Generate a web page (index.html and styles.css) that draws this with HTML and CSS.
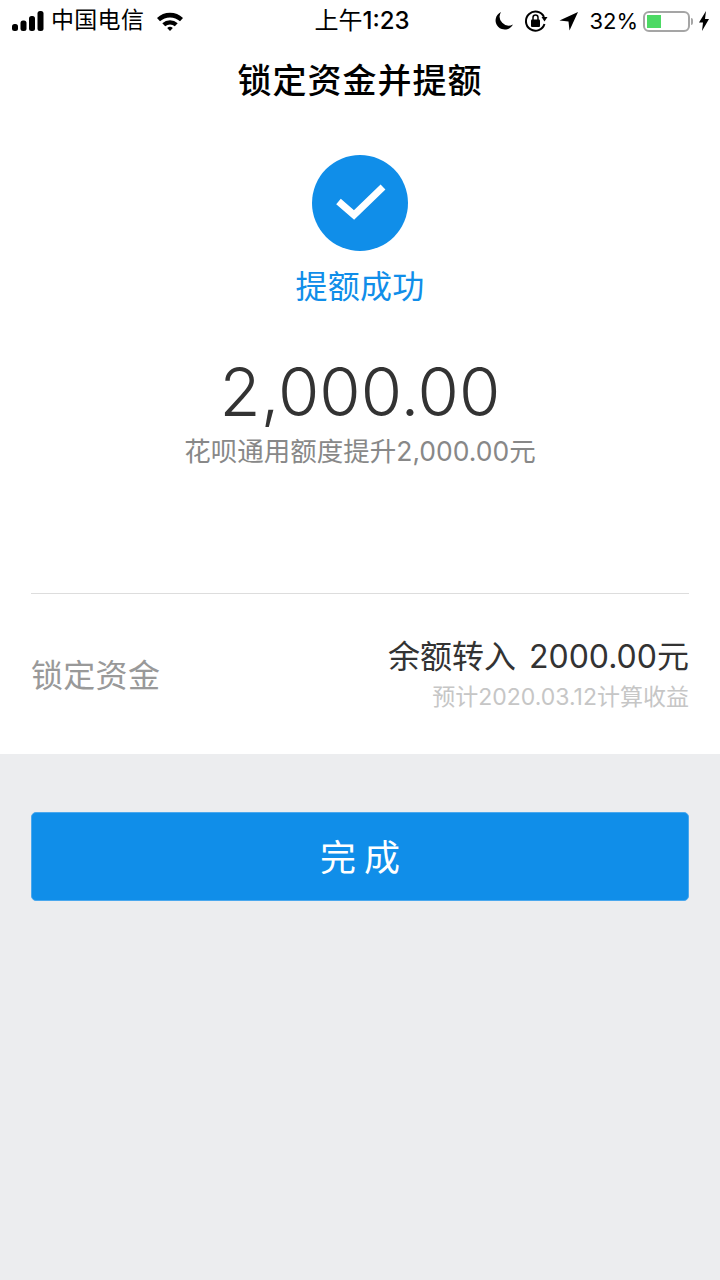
FILE: index.html
```html
<!DOCTYPE html>
<html lang="zh-CN">
<head>
<meta charset="utf-8">
<title>锁定资金并提额</title>
<link rel="stylesheet" href="styles.css">
</head>
<body>
<div class="page">
  <header class="status">
    <div class="status-side">
      <svg class="sig" width="32" height="20" viewBox="0 0 32 20"><rect x="0" y="13" width="6" height="7" rx="2.5"/><rect x="8.5" y="9.5" width="6" height="10.5" rx="2.5"/><rect x="17" y="5" width="6" height="15" rx="2.5"/><rect x="25.5" y="0" width="6" height="20" rx="2.5"/></svg>
      <span class="carrier">中国电信</span>
      <svg class="wifi" width="28" height="20" viewBox="0 0 28 20"><path d="M1 7 A19 19 0 0 1 27 7 L24 10.2 A15 15 0 0 0 4 10.2Z"/><path d="M6.3 12.3 A11.5 11.5 0 0 1 21.7 12.3 L18.8 15.3 A7.5 7.5 0 0 0 9.200 15.300Z"/><path d="M11.200 17 A4 4 0 0 1 16.800 17 L14 20Z"/></svg>
    </div>
    <div class="time">上午<span class="time-num">1:23</span></div>
    <div class="status-side right">
      <svg class="moon" width="20" height="20" viewBox="0 0 20 20"><path d="M7 1 A9.200 9.200 0 1 0 19 13.500 A9 9 0 0 1 7 1Z"/></svg>
      <svg class="lock" width="24" height="24" viewBox="0 0 24 24"><path d="M20 8 A9.500 9.500 0 1 0 20.500 15" fill="none" stroke="#000" stroke-width="2"/><path d="M17.500 8 L23.500 8 L20.500 12.500Z"/><rect x="7" y="10.500" width="9" height="7.500" rx="1"/><path d="M9 11 V8.500 A2.500 2.500 0 0 1 14 8.500 V11" fill="none" stroke="#000" stroke-width="1.500"/></svg>
      <svg class="loc" width="20" height="20" viewBox="0 0 20 20"><path d="M19 1 L0.500 9.500 L9.500 10.500 L10.500 19.500Z"/></svg>
      <span class="pct">32%</span>
      <div class="battery"><div class="battery-fill"></div></div>
      <div class="battery-cap"></div>
      <svg class="bolt" width="10" height="20" viewBox="0 0 10 20"><path d="M7 0 L0 11.500 H4 L3 20 L10 8 H6Z"/></svg>
    </div>
  </header>
  <h1 class="title">锁定资金并提额</h1>
  <section class="result">
    <div class="check">
      <svg width="52" height="40" viewBox="0 0 52 40"><path d="M4.500 18.500 L20 32 L49 4" fill="none" stroke="#fff" stroke-width="7"/></svg>
    </div>
    <div class="result-text">提额成功</div>
    <div class="amount">2,000.00</div>
    <div class="note">花呗通用额度提升2,000.00元</div>
  </section>
  <section class="detail">
    <div class="detail-label">锁定资金</div>
    <div class="detail-value">
      <div class="value-main">余额转入 <span class="num">2000.00</span>元</div>
      <div class="value-sub">预计2020.03.12计算收益</div>
    </div>
  </section>
  <section class="footer">
    <button class="done">完成</button>
  </section>
</div>
</body>
</html>
```
FILE: styles.css
```css
* { box-sizing: border-box; }
html, body { margin: 0; padding: 0; }
body {
  width: 720px;
  height: 1280px;
  overflow: hidden;
  font-family: Inter, "Noto Sans CJK SC", sans-serif;
  background: #fff;
}
.page { display: flex; flex-direction: column; height: 1280px; }
.status {
  height: 40px;
  padding: 0 11px 0 12px;
  display: grid;
  grid-template-columns: 1fr auto 1fr;
  align-items: center;
  color: #000;
}
.status svg { fill: #000; flex: none; }
.status-side { display: flex; align-items: center; }
.status-side.right { justify-content: flex-end; }
.carrier { font-size: 23px; margin-left: 7px; letter-spacing: 0.3px; line-height: 40px; padding-bottom: 2px; }
.wifi { margin-left: 12px; }
.time { font-size: 24px; text-align: center; line-height: 40px; padding-left: 3px; }
.time-num { font-weight: 500; }
.lock { margin-left: 10px; }
.loc { margin-left: 11px; }
.pct { font-size: 22px; margin-left: 10px; }
.battery {
  width: 47px; height: 21px; margin-left: 5px;
  border: 2px solid #a5a5a5; border-radius: 6px; padding: 2px;
}
.battery-fill { width: 14px; height: 100%; background: #4cd964; }
.battery-cap { width: 2px; height: 7px; background: #a5a5a5; margin-left: 1px; border-radius: 0 2px 2px 0; }
.bolt { margin-left: 6px; }
.title {
  margin: 0;
  height: 82px;
  line-height: 82px;
  font-size: 34px;
  font-weight: 500;
  letter-spacing: 1px;
  text-align: center;
  color: #000;
}
.result { display: flex; flex-direction: column; align-items: center; padding-top: 33px; }
.check {
  width: 96px; height: 96px; border-radius: 50%;
  background: #108ee9;
  display: flex; align-items: center; justify-content: center;
}
.result-text { margin-top: 16px; font-size: 32px; line-height: 40px; color: #108ee9; letter-spacing: 0.3px; }
.amount { margin-top: 40px; font-size: 67px; line-height: 90px; color: #333; font-weight: 350; }
.note { font-size: 26.5px; line-height: 36px; color: #888; margin-top: -4px; }
.detail {
  margin: 124px 31px 0;
  height: 161px;
  border-top: 1px solid #ddd;
  display: flex;
  justify-content: space-between;
  align-items: center;
}
.detail-label { font-size: 32px; color: #999; letter-spacing: 0.3px; margin-top: -2px; }
.value-main { font-size: 32px; line-height: 44px; color: #333; text-align: right; margin-top: -1px; }
.num { margin-left: 4px; }
.value-sub { font-size: 23px; line-height: 30px; color: #c6c6c6; text-align: right; margin-top: 3px; }
.footer { flex: 1; background: #ecedef; padding: 58px 31px 0; }
.done {
  display: block; width: 100%; height: 89px;
  background: #108ee9; border: 1px solid #4aa8ee; border-radius: 5px;
  color: #fff; font: inherit; font-size: 36px; letter-spacing: 8px; padding: 0 0 4px 8px;
}
```
